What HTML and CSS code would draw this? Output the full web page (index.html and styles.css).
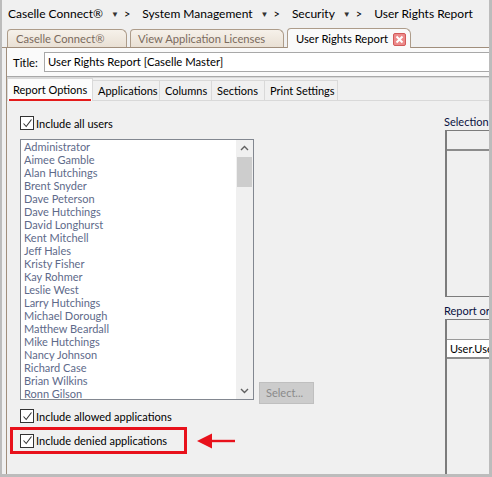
FILE: index.html
```html
<!DOCTYPE html>
<html>
<head>
<meta charset="utf-8">
<link rel="stylesheet" href="styles.css">
</head>
<body>
<div class="frame">
  <div class="crumbs">
    <span class="crumb">Caselle Connect®</span><span class="drop">▼</span><span class="sep">&gt;</span>
    <span class="crumb">System Management</span><span class="drop">▼</span><span class="sep">&gt;</span>
    <span class="crumb">Security</span><span class="drop">▼</span><span class="sep">&gt;</span>
    <span class="crumb">User Rights Report</span>
  </div>
  <div class="doc-tabs">
    <div class="dtab t1">Caselle Connect®</div>
    <div class="dtab t2">View Application Licenses</div>
    <div class="dtab active t3">User Rights Report
      <span class="close"><svg width="13" height="13" viewBox="0 0 13 13"><rect x="0.5" y="0.5" width="12" height="12" rx="1.5" fill="#ec8a8a" stroke="#d25a5a"/><path d="M3.5 3.5 L9.5 9.5 M9.5 3.5 L3.5 9.5" stroke="#fff" stroke-width="2"/></svg></span>
    </div>
  </div>
  <div class="panel">
    <div class="title-row">
      <span class="title-label">Title:</span>
      <div class="title-input">User Rights Report [Caselle Master]</div>
    </div>
    <div class="sub-tabs">
      <div class="stab active"><span class="mark">Report Options</span></div>
      <div class="stab w-app">Applications</div>
      <div class="stab w-col">Columns</div>
      <div class="stab w-sec">Sections</div>
      <div class="stab w-print">Print Settings</div>
    </div>
    <div class="content">
      <div class="left">
        <label class="check first"><span class="box"><svg width="11" height="11" viewBox="0 0 11 11"><path d="M1.5 5.5 L4.2 8.5 L9.5 1.5" fill="none" stroke="#333" stroke-width="1.1"/></svg></span>Include all users</label>
        <div class="list-row">
          <div class="listbox">
            <div class="items">
              <div>Administrator</div>
              <div>Aimee Gamble</div>
              <div>Alan Hutchings</div>
              <div>Brent Snyder</div>
              <div>Dave Peterson</div>
              <div>Dave Hutchings</div>
              <div>David Longhurst</div>
              <div>Kent Mitchell</div>
              <div>Jeff Hales</div>
              <div>Kristy Fisher</div>
              <div>Kay Rohmer</div>
              <div>Leslie West</div>
              <div>Larry Hutchings</div>
              <div>Michael Dorough</div>
              <div>Matthew Beardall</div>
              <div>Mike Hutchings</div>
              <div>Nancy Johnson</div>
              <div>Richard Case</div>
              <div>Brian Wilkins</div>
              <div>Ronn Gilson</div>
            </div>
            <div class="scroll">
              <svg class="arr" width="17" height="17" viewBox="0 0 17 17"><path d="M5 10 L8.5 6.5 L12 10" fill="none" stroke="#606060" stroke-width="1.4"/></svg>
              <div class="thumb"></div>
              <div class="track"></div>
              <svg class="arr" width="17" height="17" viewBox="0 0 17 17"><path d="M5 7 L8.5 10.5 L12 7" fill="none" stroke="#606060" stroke-width="1.4"/></svg>
            </div>
          </div>
          <div class="select-btn">Select...</div>
        </div>
        <label class="check second"><span class="box"><svg width="11" height="11" viewBox="0 0 11 11"><path d="M1.5 5.5 L4.2 8.5 L9.5 1.5" fill="none" stroke="#333" stroke-width="1.1"/></svg></span>Include allowed applications</label>
        <div class="denied-row">
          <label class="check hl"><span class="box"><svg width="11" height="11" viewBox="0 0 11 11"><path d="M1.5 5.5 L4.2 8.5 L9.5 1.5" fill="none" stroke="#333" stroke-width="1.1"/></svg></span>Include denied applications</label>
          <svg class="red-arrow" width="40" height="18" viewBox="0 0 40 18"><path d="M0 9 L15 1.5 L15 16.5 Z" fill="#e8111b"/><path d="M14 9 L38 9" stroke="#e8111b" stroke-width="2.4"/></svg>
        </div>
      </div>
      <div class="right">
        <div class="rlabel">Selection</div>
        <div class="grid g1"><div class="ghead"></div></div>
        <div class="rlabel second">Report or</div>
        <div class="grid g2"><div class="ghead"></div><div class="grow">User.Use</div></div>
      </div>
    </div>
  </div>
</div>
</body>
</html>
```
FILE: styles.css
```css
* { box-sizing: border-box; }
body { margin: 0; }
.frame {
  width: 492px; height: 477px;
  border-left: 2px solid #bcbcbc; border-right: 3px solid #bcbcbc; border-bottom: 3px solid #bcbcbc;
  background: #f0f0f0;
  font-family: Lato, "Noto Sans", sans-serif; font-size: 11px; color: #000;
  overflow: hidden; display: flex; flex-direction: column;
}
.crumbs {
  flex: none; height: 27px; display: flex; align-items: center; padding-left: 6px;
  font-size: 12px; white-space: nowrap; background: #f0f0f0;
}
.drop { font-size: 8px; margin-left: 8px; color: #333; }
.sep { margin-left: 5px; margin-right: 12px; font-size: 11px; }
.doc-tabs {
  flex: none; height: 21px; display: flex; align-items: flex-end; padding-left: 5px; gap: 3px;
  border-bottom: 1px solid #a08e7c; background: #f0f0f0;
}
.dtab {
  height: 18px; padding-left: 8px; border: 1px solid #ad9c8a; border-bottom: 0;
  border-radius: 4px 6px 0 0;
  background: linear-gradient(#f6f1ea, #e9e0d4);
  color: #7b6b5e; font-size: 11.2px; line-height: 17px; white-space: nowrap;
}
.t1 { width: 120px; }
.t2 { width: 154px; padding-left: 7px; }
.t3 { width: 124px; }
.dtab.active {
  height: 20px; margin-bottom: -1px; background: #fafafa; color: #000;
  line-height: 19px; display: flex; align-items: center; padding-left: 8px;
  position: relative;
}
.close { position: absolute; right: 4px; top: 4px; height: 13px; }
.close svg { display: block; }
.panel {
  flex: 1; min-height: 0; margin-left: 4px; border-left: 1px solid #a08e7c;
  display: flex; flex-direction: column; overflow: hidden;
}
.title-row {
  flex: none; height: 29px; background: #fafafa; display: flex; align-items: center;
  padding-left: 6px; border-bottom: 1px solid #a9a9a9;
}
.title-label { width: 31px; font-size: 11.3px; }
.title-input {
  flex: 1; height: 20px; background: #fff; border: 1px solid #a8a8a8; border-right: 0;
  padding-left: 3px; line-height: 18px; font-size: 11.3px;
}
.sub-tabs {
  flex: none; height: 24px; display: flex; align-items: flex-end; border-top: 1px solid #d8d8d8;
  border-bottom: 1px solid #d9d9d9; background: #f0f0f0;
}
.stab {
  height: 20px; border: 1px solid #d9d9d9; border-bottom: 0; margin-left: -1px;
  padding-left: 5px; line-height: 19px; white-space: nowrap; background: #f0f0f0;
}
.stab.active {
  height: 23px; width: 86px; margin-left: 0; background: #fcfcfc; margin-bottom: -1px;
  padding-left: 5px; line-height: 21px;
}
.mark { display: inline-block; border-bottom: 2px solid #e41b1b; line-height: 16px; padding-bottom: 1px; padding-right: 4px; margin-left: -4px; padding-left: 4px; }
.w-app { width: 68px; }
.w-col { width: 53px; }
.w-sec { width: 54px; }
.w-print { width: 74px; }
.content { flex: 1; min-height: 0; display: grid; grid-template-columns: 437px 1fr; overflow: hidden; }
.left { padding-left: 13px; padding-top: 15px; }
.check { display: flex; align-items: center; height: 14px; white-space: nowrap; }
.box {
  width: 14px; height: 14px; border: 1px solid #333; background: #fff; margin-right: 2px;
  display: flex; align-items: center; justify-content: center; flex: none;
}
.box svg { display: block; }
.list-row { display: flex; align-items: flex-end; margin-top: 9px; }
.listbox {
  width: 234px; height: 261px; background: #fff; border: 1px solid #828790;
  display: flex;
}
.items { flex: 1; padding-left: 3px; color: #5e6a8a; overflow: hidden; }
.items div { height: 13px; line-height: 13px; white-space: nowrap; }
.scroll { width: 17px; display: flex; flex-direction: column; background: #f0f0f0; }
.arr { display: block; flex: none; }
.thumb { height: 30px; background: #cdcdcd; margin: 0 1px; flex: none; }
.track { flex: 1; }
.select-btn {
  margin-left: 5px; margin-bottom: -4px; width: 55px; height: 22px;
  background: #cccccc; border: 1px solid #bfbfbf; color: #8a8a8a;
  line-height: 20px; padding-left: 6px;
}
.check.second { margin-top: 9px; }
.denied-row { display: flex; align-items: center; margin-top: 4px; margin-left: -10px; }
.check.hl {
  border: 3px solid #e8111b; height: 27px; width: 177px; padding-left: 7px;
}
.red-arrow { margin-left: 10px; display: block; }
.right { padding-top: 13px; }
.rlabel { color: #0a1040; height: 16px; line-height: 16px; white-space: nowrap; }
.grid { border: 1px solid #7c7c7c; border-left-width: 2px; border-right: 0; margin-left: 1px; }
.g1 { height: 167px; }
.ghead { height: 20px; border-bottom: 2px solid #8c8c8c; background: #f0f0f0; }
.rlabel.second { margin-top: 6px; }
.g2 { height: 170px; border-bottom: 0; }
.g2 .ghead { height: 19px; border-bottom: 0; }
.grow { height: 20px; background: #fff; border-top: 1px solid #999; border-bottom: 2px solid #8c8c8c; padding-left: 3px; line-height: 18px; }
```
